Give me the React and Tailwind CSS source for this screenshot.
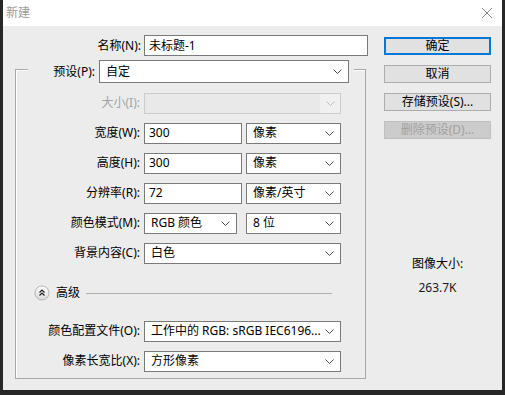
import React from 'react';

const FONT = { fontFamily: '"Noto Sans", "Noto Sans CJK SC", sans-serif' };

function Chevron({ color = '#4a4a4a' }) {
  return (
    <svg width="9" height="5" viewBox="0 0 9 5">
      <path d="M0.5 0.5 L4.5 4.5 L8.5 0.5" stroke={color} fill="none" strokeWidth="1" />
    </svg>
  );
}

function Field({ w, value }) {
  return (
    <div className={`${w} h-[21px] bg-white border border-[#7a7a7a] flex items-center pl-[4px] text-[12px] leading-[16px] text-black`}>
      {value}
    </div>
  );
}

function Select({ w, value, h = 'h-[21px]' }) {
  return (
    <div className={`${w} ${h} bg-white border border-[#7a7a7a] flex items-center justify-between pl-[6px] pr-[6px] text-[12px] leading-[16px] text-black`}>
      <span className="whitespace-nowrap">{value}</span>
      <Chevron />
    </div>
  );
}

function Row({ label, muted, children }) {
  return (
    <div className="h-[30px] flex items-center">
      <div className={`w-[128px] pr-[4px] text-right text-[12px] leading-[16px] whitespace-nowrap ${muted ? 'text-[#a3a3a3]' : 'text-black'}`}>
        {label}
      </div>
      {children}
    </div>
  );
}

function Button({ children, primary, disabled }) {
  let cls = 'border border-[#adadad] bg-[#e1e1e1] text-black';
  if (primary) cls = 'border-2 border-[#0078d7] bg-[#e1e1e1] text-black';
  if (disabled) cls = 'border border-[#bfbfbf] bg-[#cccccc] text-[#a0a0a0]';
  return (
    <div className={`h-[18px] w-[107px] flex items-center justify-center text-[12px] leading-[16px] whitespace-nowrap ${cls}`}>
      {children}
    </div>
  );
}

function AdvancedIcon() {
  return (
    <svg width="16" height="16" viewBox="0 0 16 16">
      <defs>
        <linearGradient id="adv" x1="0" y1="0" x2="0" y2="1">
          <stop offset="0" stopColor="#ffffff" />
          <stop offset="1" stopColor="#d9d9d9" />
        </linearGradient>
      </defs>
      <circle cx="8" cy="8" r="7" fill="url(#adv)" stroke="#b3b3b3" />
      <path d="M5.5 7.5 L8 5 L10.5 7.5 M5.5 10.5 L8 8 L10.5 10.5" stroke="#222" fill="none" strokeWidth="1.2" />
    </svg>
  );
}

export default function App() {
  return (
    <div style={FONT} className="w-[505px] h-[395px] bg-[#272727] px-[3px] pb-[5px] flex flex-col">
      {/* title bar */}
      <div className="h-[26px] bg-white flex items-center justify-between pl-[3px] pr-[10px]">
        <span className="text-[12px] leading-[16px] text-[#9a9a9a]">新建</span>
        <svg width="10" height="10" viewBox="0 0 10 10">
          <path d="M0 0 L10 10 M10 0 L0 10" stroke="#8a8a8a" strokeWidth="1" />
        </svg>
      </div>

      <div className="flex-1 bg-[#ececec] flex">
        {/* left column */}
        <div className="pl-[12px] w-[365px]">
          <div className="mt-[9px] h-[21px] flex items-center">
            <div className="w-[129px] pr-[3px] text-right text-[12px] leading-[16px] text-black">名称(N):</div>
            <Field w="w-[224px]" value="未标题-1" />
          </div>

          <div className="mt-[13px] w-[351px] h-[310px] border border-[#a8a8a8] shadow-[inset_1px_1px_0_#ffffff]">
            {/* legend row */}
            <div className="-mt-[10px] ml-[12px] w-[326px] h-[23px] bg-[#ececec] flex items-center">
              <div className="w-[71px] pr-[4px] text-right text-[12px] leading-[16px] text-black">预设(P):</div>
              <Select w="w-[250px]" h="h-[23px]" value="自定" />
            </div>

            <div className="mt-[5px]">
              <Row label="大小(I):" muted>
                <div className="w-[197px] h-[21px] border border-[#cccccc] bg-[#e9e9e9] flex justify-end">
                  <div className="w-[20px] h-full bg-[#f0f0f0] flex items-center justify-center">
                    <Chevron color="#bdbdbd" />
                  </div>
                </div>
              </Row>
              <Row label="宽度(W):">
                <Field w="w-[98px]" value="300" />
                <div className="w-[4px]" />
                <Select w="w-[95px]" value="像素" />
              </Row>
              <Row label="高度(H):">
                <Field w="w-[98px]" value="300" />
                <div className="w-[4px]" />
                <Select w="w-[95px]" value="像素" />
              </Row>
              <Row label="分辨率(R):">
                <Field w="w-[98px]" value="72" />
                <div className="w-[4px]" />
                <Select w="w-[95px]" value="像素/英寸" />
              </Row>
              <Row label="颜色模式(M):">
                <Select w="w-[93px]" value="RGB 颜色" />
                <div className="w-[9px]" />
                <Select w="w-[95px]" value="8 位" />
              </Row>
              <Row label="背景内容(C):">
                <Select w="w-[197px]" value="白色" />
              </Row>
            </div>

            <div className="mt-[10px] h-[30px] flex items-center pl-[18px]">
              <AdvancedIcon />
              <span className="ml-[6px] text-[12px] leading-[16px] text-black">高级</span>
              <div className="ml-[6px] w-[246px] h-[1px] bg-[#b0b0b0]" />
            </div>

            <div className="mt-[8px]">
              <Row label="颜色配置文件(O):">
                <Select w="w-[197px]" value="工作中的 RGB: sRGB IEC6196..." />
              </Row>
              <Row label="像素长宽比(X):">
                <Select w="w-[197px]" value="方形像素" />
              </Row>
            </div>
          </div>
        </div>

        {/* right column */}
        <div className="ml-[16px] w-[107px] pt-[11px] flex flex-col">
          <div className="flex flex-col gap-[10px]">
            <Button primary>确定</Button>
            <Button>取消</Button>
            <Button>存储预设(S)...</Button>
            <Button disabled>删除预设(D)...</Button>
          </div>
          <div className="mt-[117px] text-center text-[12px] leading-[16px] text-black">图像大小:</div>
          <div className="mt-[8px] text-center text-[12px] leading-[16px] text-[#1a1a1a]">263.7K</div>
        </div>
      </div>
    </div>
  );
}
